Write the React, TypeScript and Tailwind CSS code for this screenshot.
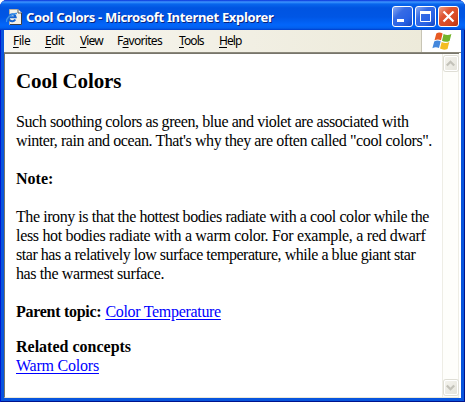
import React from "react";

function PageIcon() {
  return (
    <svg width="16" height="16" viewBox="0 0 16 16">
      <path d="M3.500 .5h8.500l3.500 3.500v11.500h-12z" fill="#f4f1e8" stroke="#b8b2a4" />
      <path d="M15.500 4v11.500H4" fill="none" stroke="#3c3d42" />
      <path d="M12 .5v3.500h3.500" fill="#fff" stroke="#5d5a55" />
      <path d="M9.300 10.500A3.500 3.500 0 1 1 9.700 8.300H3.500" fill="none" stroke="#1765d2" strokeWidth="2" />
      <path d="M.7 13C-.5 10 5 4 11 4.500" fill="none" stroke="#3a91e8" strokeWidth="1.400" />
    </svg>
  );
}

function WindowsFlag() {
  return (
    <svg width="20" height="19" viewBox="0 0 20 19">
      <path d="M4.300 1.400Q7.500-.3 10.600 1.500L9 8.200Q5.600 6.700 2.500 8.300z" fill="#e75a23" />
      <path d="M11.600 2.100Q15.500 4 19.400 2.100L17.600 8.900Q13.800 10.700 10 8.800z" fill="#74b52c" />
      <path d="M2.200 9.400Q5.400 7.900 8.700 9.300L7 16Q3.600 14.500.4 16.200z" fill="#4387dc" />
      <path d="M9.700 9.900Q13.500 11.800 17.300 10L15.500 17Q11.700 18.700 8 16.600z" fill="#f4bd22" />
    </svg>
  );
}

function Control({ kind }: { kind: "min" | "max" | "close" }) {
  const tone =
    kind === "close"
      ? "bg-[linear-gradient(135deg,#eca18a_0%,#df5430_35%,#d84923_70%,#b9320e_100%)]"
      : "bg-[linear-gradient(135deg,#8ba9f0_0%,#366be5_35%,#2862e5_70%,#1545be_100%)]";
  return (
    <button className={`h-[21px] w-[21px] rounded-[3px] border border-white ${tone}`}>
      <svg width="19" height="19" viewBox="0 0 19 19" fill="none" stroke="white">
        {kind === "min" && <path d="M4 13.500h7" strokeWidth="3" />}
        {kind === "max" && <path d="M4.500 4v10.500h10V4" strokeWidth="1" />}
        {kind === "max" && <path d="M4 5.500h11" strokeWidth="3" />}
        {kind === "close" && <path d="M4.500 4.500l10 10M14.500 4.500l-10 10" strokeWidth="2.200" />}
      </svg>
    </button>
  );
}

function ScrollButton({ down = false }: { down?: boolean }) {
  return (
    <button className="flex h-[15px] w-[14px] items-center justify-center rounded-[2px] border border-white bg-[linear-gradient(135deg,#f4f3ed,#e5e4dc)] shadow-[0_0_0_1px_#dfded5]">
      <svg width="9" height="7" viewBox="0 0 9 7" className={down ? "rotate-180" : ""}>
        <path d="M.8 5.500L4.500 1.800L8.200 5.500" fill="none" stroke="#c3c2b9" strokeWidth="2.300" />
      </svg>
    </button>
  );
}

const menus = [
  { before: "", hot: "F", after: "ile", box: "w-[32px] tracking-[-0.5px]" },
  { before: "", hot: "E", after: "dit", box: "w-[35px] tracking-[-0.6px]" },
  { before: "", hot: "V", after: "iew", box: "w-[37px] tracking-[-0.9px]" },
  { before: "F", hot: "a", after: "vorites", box: "w-[62px] tracking-[-0.7px]" },
  { before: "", hot: "T", after: "ools", box: "w-[40px] tracking-[-0.9px]" },
  { before: "", hot: "H", after: "elp", box: "w-[30px] tracking-[-0.9px]" },
];

export default function App() {
  return (
    <div className="h-[402px] w-[465px] overflow-hidden bg-white">
      <div className="flex h-full flex-col overflow-hidden rounded-t-[7px] bg-[#0855dd] shadow-[inset_1px_0_#0019cf,inset_-1px_0_#00138c,inset_0_-1px_#00138c]">
        <header className="flex h-[30px] shrink-0 items-center bg-[linear-gradient(180deg,#0831d9_0px,#3d95ff_2px,#0866ed_4px,#0054e1_8px,#0056e5_17px,#0266fb_25px,#0260ee_28px,#003dcb_30px)] pt-[3px] pr-[6px] pl-[6px]">
          <PageIcon />
          <h1 className="ml-[4px] whitespace-nowrap font-['Noto_Sans',sans-serif] text-[13px] leading-[18px] font-bold tracking-[-0.33px] text-white [text-shadow:1px_1px_#0a247c]">
            Cool Colors - Microsoft Internet Explorer
          </h1>
          <div className="ml-auto flex gap-[2px]">
            <Control kind="min" />
            <Control kind="max" />
            <Control kind="close" />
          </div>
        </header>
        <div className="mx-[4px] mb-[4px] flex min-h-0 flex-1 flex-col bg-white">
          <nav className="flex h-[23px] shrink-0 border-b border-[#8b887b] bg-[linear-gradient(90deg,#f7f6f0,#ece9d8)]">
            <div className="flex flex-1 pt-[3px] pl-[9px] font-['Noto_Sans',sans-serif] text-[12px] leading-[16px] text-black">
              {menus.map((m) => (
                <span key={m.hot} className={`shrink-0 whitespace-nowrap ${m.box}`}>
                  {m.before}<u className="underline-offset-[2px]">{m.hot}</u>{m.after}
                </span>
              ))}
            </div>
            <div className="flex w-[40px] items-center justify-center border-l border-[#c8c5b5] bg-white">
              <WindowsFlag />
            </div>
          </nav>
          <div className="mr-[2px] flex min-h-0 flex-1 border-t border-b border-l border-[#77756b] border-b-[#ece9d8]">
            <main className="min-w-0 flex-1 pt-[13px] pl-[11px] whitespace-nowrap font-['Liberation_Serif',serif] text-[16px] leading-[19px] text-black">
              <h2 className="h-[45px] text-[21px] leading-[28px] font-bold tracking-[-0.14px]">Cool Colors</h2>
              <p>
                <span className="tracking-[-0.415px]">Such soothing colors as green, blue and violet are associated with</span><br />
                <span className="tracking-[-0.41px]">winter, rain and ocean. That's why they are often called "cool colors".</span>
              </p>
              <p className="mt-[19px] font-bold">Note:</p>
              <p className="mt-[19px]">
                <span className="tracking-[-0.43px]">The irony is that the hottest bodies radiate with a cool color while the</span><br />
                <span className="tracking-[-0.32px]">less hot bodies radiate with a warm color. For example, a red dwarf</span><br />
                <span className="tracking-[-0.465px]">star has a relatively low surface temperature, while a blue giant star</span><br />
                <span className="tracking-[-0.38px]">has the warmest surface.</span>
              </p>
              <p className="mt-[19px]">
                <b className="tracking-[-0.28px]">Parent topic:</b> <a className="tracking-[-0.31px] text-[#0000ff] underline underline-offset-[2px]">Color Temperature</a>
              </p>
              <p className="mt-[16px] font-bold">Related concepts</p>
              <p><a className="tracking-[-0.22px] text-[#0000ff] underline underline-offset-[2px]">Warm Colors</a></p>
            </main>
            <aside className="flex w-[17px] shrink-0 flex-col items-center justify-between border-x border-[#eeede5] bg-[#fefefb] py-[2px]">
              <ScrollButton />
              <ScrollButton down />
            </aside>
          </div>
        </div>
      </div>
    </div>
  );
}
